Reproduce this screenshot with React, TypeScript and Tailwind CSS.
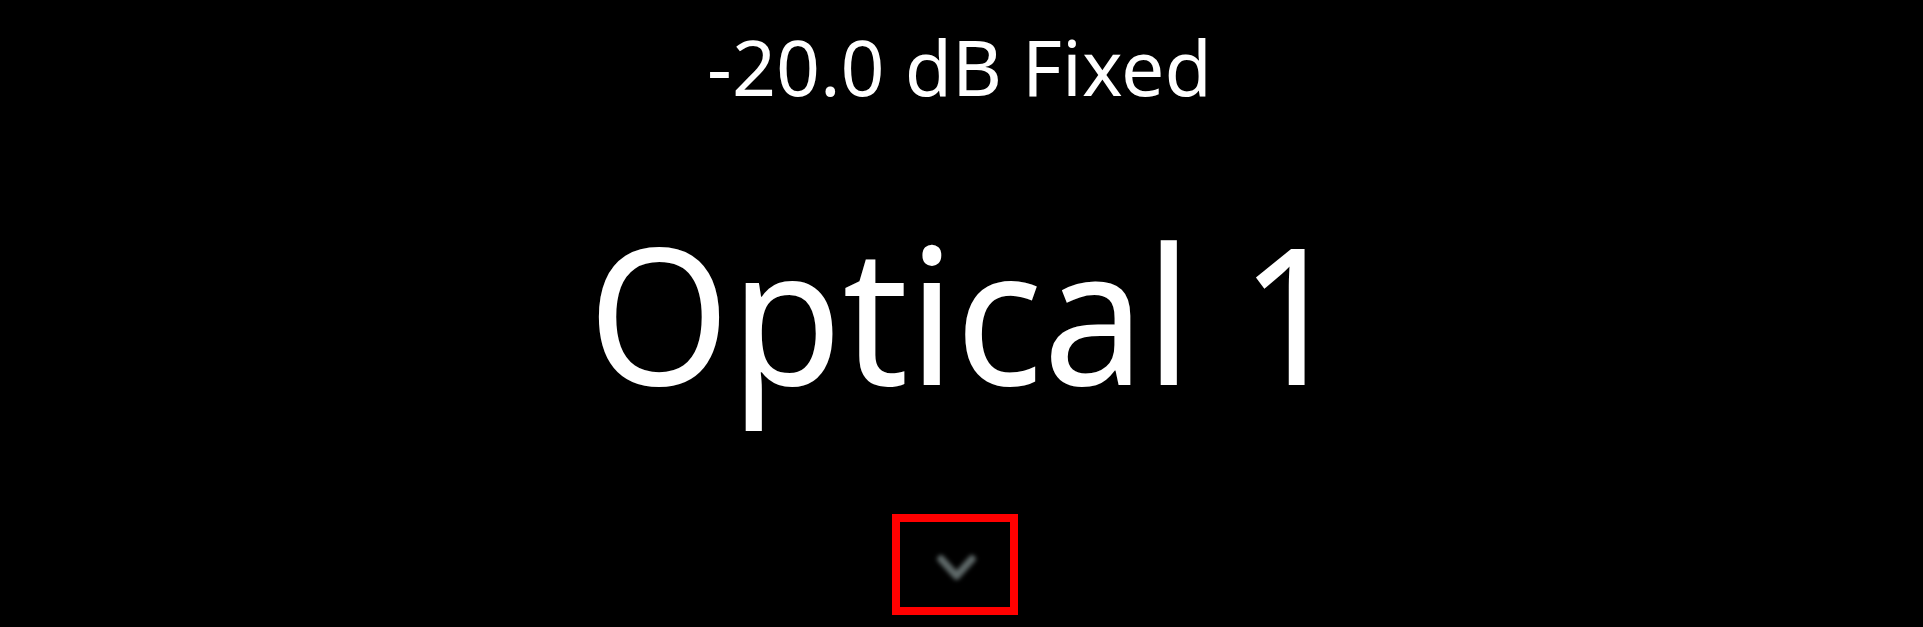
export default function App() {
  return (
    <div
      className="w-[1923px] h-[627px] bg-black flex flex-col items-center text-white overflow-hidden"
      style={{ fontFamily: '"Noto Sans", "Open Sans", sans-serif' }}
    >
      <div className="mt-[28px] mr-[4px] text-[77px] leading-none h-[77px]">-20.0 dB Fixed</div>
      <div className="mt-[112px] ml-[9px] text-[190px] leading-none h-[190px] scale-x-[0.96]">Optical 1</div>
      <div className="mt-[107px] mr-[13px] w-[126px] h-[101px] border-[8px] border-[#ff0000] flex items-center justify-center">
        <svg width="60" height="50" viewBox="0 0 60 50" className="blur-[2px] mt-[12px]">
          <polyline
            points="16,13 31.5,30 47,13"
            fill="none"
            stroke="#5e6868"
            strokeWidth="7.5"
            strokeLinecap="round"
            strokeLinejoin="round"
          />
        </svg>
      </div>
    </div>
  );
}
